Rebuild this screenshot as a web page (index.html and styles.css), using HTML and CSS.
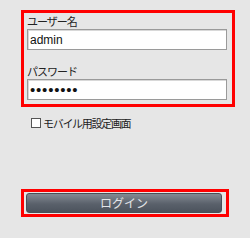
FILE: index.html
```html
<!DOCTYPE html>
<html lang="ja">
<head>
<meta charset="utf-8">
<link rel="stylesheet" href="styles.css">
</head>
<body>
<div class="page">
  <div class="login-box">
    <label class="field-label" for="user">ユーザー名</label>
    <input class="field" id="user" type="text" value="admin">
    <label class="field-label second" for="pass">パスワード</label>
    <input class="field pw" id="pass" type="password" value="12345678">
  </div>
  <label class="mobile"><span class="check"></span><span class="mobile-text">モバイル用設定画面</span></label>
  <div class="login-wrap">
    <button class="login-btn" type="button">ログイン</button>
  </div>
</div>
</body>
</html>
```
FILE: styles.css
```css
html, body {
  margin: 0;
  padding: 0;
  background: #e6e6e6;
}
body {
  width: 250px;
  height: 238px;
  font-family: "Noto Sans CJK JP", "Liberation Sans", sans-serif;
  color: #1a1a1a;
}
.page {
  padding-top: 10px;
}
.login-box {
  display: flex;
  flex-direction: column;
  width: 204px;
  margin-left: 21px;
  border: 3px solid #ff0000;
  padding: 1px 1px 4px 3px;
}
.field-label {
  display: block;
  height: 15px;
  font-size: 11px;
  line-height: 15px;
  letter-spacing: -1px;
  color: #222;
}
.field-label.second {
  margin-top: 14px;
}
.field {
  box-sizing: border-box;
  width: 200px;
  height: 21px;
  margin: 0;
  padding: 0 2px;
  border: 1px solid #9a9a9a;
  box-shadow: inset 1px 1px 0 #d8d8d8;
  background: #fff;
  font-family: "Liberation Sans", sans-serif;
  font-size: 12px;
  color: #111;
  outline: none;
}
.field.pw {
  font-size: 15px;
  letter-spacing: 0.8px;
}
.mobile {
  display: flex;
  align-items: center;
  margin: 10px 0 0 31px;
  height: 12px;
}
.check {
  box-sizing: border-box;
  width: 10px;
  height: 10px;
  border: 1px solid #555;
  background: #fff;
  margin-right: 2px;
}
.mobile-text {
  font-size: 11px;
  line-height: 12px;
  letter-spacing: -1.3px;
  color: #222;
}
.login-wrap {
  display: flex;
  width: 199px;
  margin: 60px 0 0 21px;
  border: 3px solid #ff0000;
  padding: 1px 1px 1px 2px;
}
.login-btn {
  width: 196px;
  height: 20px;
  margin: 0;
  padding: 0;
  border: 1px solid #4a5058;
  border-radius: 3px;
  background: linear-gradient(#848a93, #5a616b 55%, #4c535d);
  color: #e2e4e8;
  font-family: "Noto Sans CJK JP", sans-serif;
  font-size: 12px;
  letter-spacing: 0;
  line-height: 18px;
}
```
